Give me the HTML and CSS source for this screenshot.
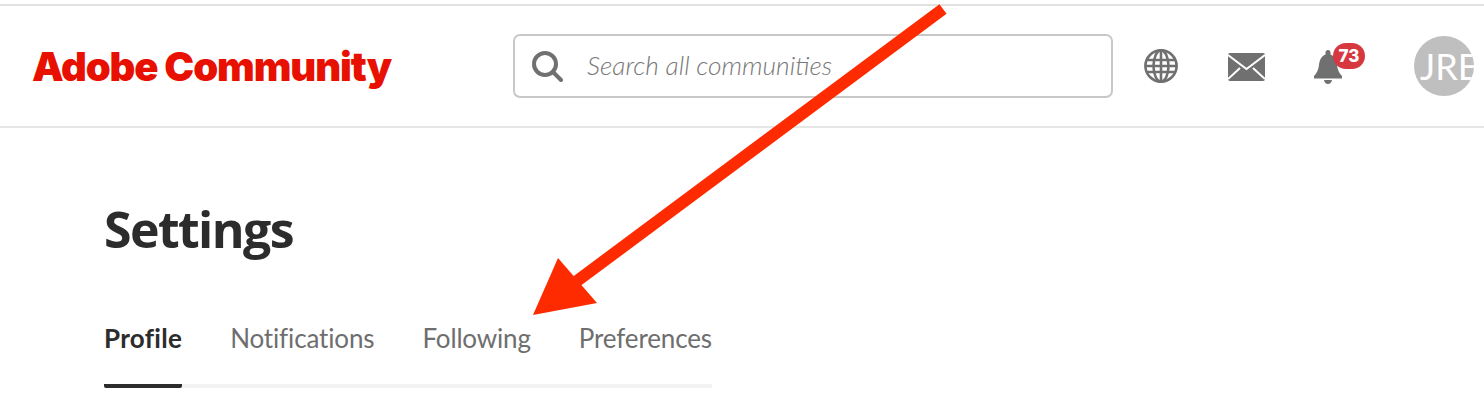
FILE: index.html
```html
<!DOCTYPE html>
<html lang="en">
<head>
<meta charset="utf-8">
<title>Settings - Adobe Community</title>
<link rel="stylesheet" href="styles.css">
</head>
<body>
<header class="header">
  <a class="logo">Adobe Community</a>
  <div class="search">
    <svg class="search-icon" viewBox="0 0 32 32" width="32" height="32"><circle cx="14" cy="14" r="11" fill="none" stroke="#707070" stroke-width="4"/><path d="M22 22l8 8" stroke="#707070" stroke-width="4" stroke-linecap="round"/></svg>
    <span class="search-text">Search all communities</span>
  </div>
  <div class="actions">
    <svg class="globe" viewBox="0 0 34 34" width="34" height="34"><g fill="none" stroke="#707070" stroke-width="2.6"><circle cx="17" cy="17" r="15.6"/><ellipse cx="17" cy="17" rx="7.5" ry="15.6"/><path d="M17 1v32M2 11h30M2 23h30M1 17h32"/></g></svg>
    <svg class="mail" viewBox="0 0 37 28" width="37" height="28"><rect width="37" height="28" rx="2" fill="#707070"/><path d="M0 2l18.500 14L37 2M0 26l12-11M37 26L25 15" fill="none" stroke="#fff" stroke-width="2"/></svg>
    <div class="bell">
      <svg viewBox="0 0 28 34" width="28" height="34"><path d="M14 0c1.500 0 2.500 1 2.500 2.500v2c4.500 2 6 6 6.500 10.500.5 4.500 2 8 5 11v2.500H0V26c3-3 4.500-6.500 5-11 .5-4.500 2-8.500 6.500-10.500v-2C11.500 1 12.500 0 14 0zM10 30h8c-.5 2.500-2 4-4 4s-3.500-1.500-4-4z" fill="#707070"/></svg>
      <span class="badge">73</span>
    </div>
    <div class="avatar">JRE</div>
  </div>
</header>
<main class="main">
  <h1 class="title">Settings</h1>
  <nav class="tabs">
    <a class="tab tab-active">Profile</a>
    <a class="tab">Notifications</a>
    <a class="tab">Following</a>
    <a class="tab">Preferences</a>
  </nav>
</main>
<svg class="arrow" viewBox="0 0 1484 418" width="1484" height="418"><path d="M943 9L577 281" stroke="#fe2b00" stroke-width="12" fill="none"/><path d="M533 315L558 258L597 303Z" fill="#fe2b00"/></svg>
</body>
</html>
```
FILE: styles.css
```css
* { box-sizing: border-box; }
html, body { margin: 0; padding: 0; }
body {
  width: 1484px;
  height: 418px;
  overflow: hidden;
  background: #fff;
  position: relative;
  font-family: "Open Sans", "Liberation Sans", sans-serif;
}
.header {
  margin-top: 4px;
  height: 124px;
  border-top: 2px solid #e1e1e1;
  border-bottom: 2px solid #e6e6e6;
  display: flex;
  align-items: center;
  padding-left: 32px;
}
.logo {
  width: 481px;
  flex: none;
  font-family: "Inter", sans-serif;
  font-weight: 900;
  font-size: 40px;
  letter-spacing: -1.1px;
  color: #e81000;
  line-height: 1;
  padding-top: 2px;
}
.search {
  width: 600px;
  height: 64px;
  flex: none;
  border: 2px solid #c8c8c8;
  border-radius: 7px;
  display: flex;
  align-items: center;
  padding-left: 16px;
  gap: 24px;
}
.search-text {
  font-family: "Lato", sans-serif;
  font-style: italic;
  font-weight: 300;
  font-size: 26.3px;
  color: #777;
  padding-bottom: 2px;
}
.actions {
  display: flex;
  align-items: center;
  margin-left: 31px;
}
.mail { margin-left: 50px; margin-top: 1px; }
.bell { margin-left: 49px; position: relative; width: 28px; height: 34px; margin-top: 2px; }
.bell svg { display: block; }
.badge {
  position: absolute;
  left: 19px;
  top: -7px;
  width: 32px;
  height: 26px;
  border-radius: 13px;
  background: #d7373f;
  color: #fff;
  font-family: "Inter", sans-serif;
  font-size: 17px;
  font-weight: 800;
  line-height: 26px;
  text-align: center;
}
.avatar {
  margin-left: 72px;
  width: 60px;
  height: 60px;
  flex: none;
  border-radius: 50%;
  background: #bfbfbf;
  color: #fff;
  font-family: "Lato", sans-serif;
  font-size: 36px;
  line-height: 60px;
  padding-left: 6px;
  overflow: hidden;
  white-space: nowrap;
}
.main { padding: 69px 0 0 104px; width: 712px; }
.title {
  margin: 0;
  font-size: 50px;
  line-height: 64px;
  font-weight: 700;
  color: #2c2c2c;
  letter-spacing: -1.6px;
}
.tabs {
  margin-top: 59px;
  display: flex;
  gap: 48px;
  width: 608px;
  height: 68px;
  border-bottom: 4px solid #f3f3f3;
}
.tab {
  font-family: "Lato", sans-serif;
  font-size: 26px;
  line-height: 36px;
  color: #6e6e6e;
  height: 68px;
  flex: none;
  letter-spacing: -0.15px;
}
.tab-active {
  font-weight: 700;
  color: #2c2c2c;
  border-bottom: 4px solid #2c2c2c;
  border-radius: 2px;
  letter-spacing: .3px;
}
.arrow { position: absolute; left: 0; top: 0; pointer-events: none; }
```
